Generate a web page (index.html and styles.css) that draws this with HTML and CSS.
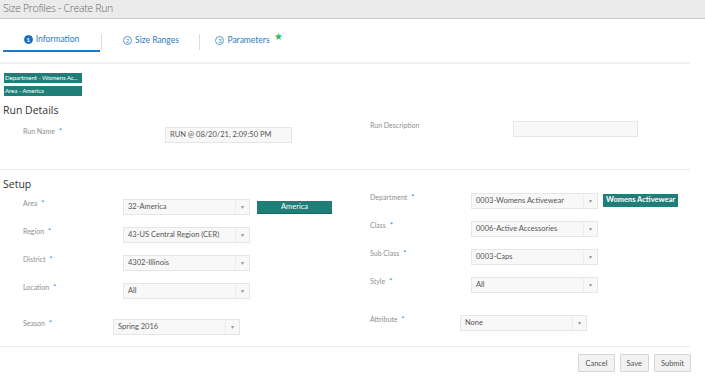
FILE: index.html
```html
<!DOCTYPE html>
<html lang="en">
<head>
<meta charset="utf-8">
<title>Size Profiles - Create Run</title>
<link rel="stylesheet" href="styles.css">
</head>
<body>
<header class="titlebar">Size Profiles - Create Run</header>

<nav class="tabs">
  <div class="tab active"><span class="num filled">1</span>Information</div>
  <div class="tab"><span class="num">2</span>Size Ranges</div>
  <div class="tab last"><span class="num">3</span>Parameters<span class="star">★</span></div>
</nav>

<div class="chips">
  <span class="chip">Department - Womens Ac...</span>
  <span class="chip">Area - America</span>
</div>

<section class="section details">
  <h2 class="heading">Run Details</h2>
  <div class="cols">
    <div class="col left">
      <div class="row"><label class="lbl wide">Run Name <i>*</i></label><div class="input">RUN @ 08/20/21, 2:09:50 PM</div></div>
    </div>
    <div class="col right">
      <div class="row"><label class="lbl wide">Run Description</label><div class="input empty"></div></div>
    </div>
  </div>
</section>

<section class="section setup">
  <h2 class="heading">Setup</h2>
  <div class="cols">
    <div class="col left">
      <div class="row"><label class="lbl">Area <i>*</i></label><div class="select">32-America<span class="arrow">▾</span></div><span class="tag tag-area">America</span></div>
      <div class="row"><label class="lbl">Region <i>*</i></label><div class="select">43-US Central Region (CER)<span class="arrow">▾</span></div></div>
      <div class="row"><label class="lbl">District <i>*</i></label><div class="select">4302-Illinois<span class="arrow">▾</span></div></div>
      <div class="row"><label class="lbl">Location <i>*</i></label><div class="select">All<span class="arrow">▾</span></div></div>
      <div class="row last"><label class="lbl short">Season <i>*</i></label><div class="select">Spring 2016<span class="arrow">▾</span></div></div>
    </div>
    <div class="col right">
      <div class="row"><label class="lbl">Department <i>*</i></label><div class="select">0003-Womens Activewear<span class="arrow">▾</span></div><span class="tag tag-dept">Womens Activewear</span></div>
      <div class="row"><label class="lbl">Class <i>*</i></label><div class="select">0006-Active Accessories<span class="arrow">▾</span></div></div>
      <div class="row"><label class="lbl">Sub Class <i>*</i></label><div class="select">0003-Caps<span class="arrow">▾</span></div></div>
      <div class="row"><label class="lbl">Style <i>*</i></label><div class="select">All<span class="arrow">▾</span></div></div>
      <div class="row last r"><label class="lbl short">Attribute <i>*</i></label><div class="select">None<span class="arrow">▾</span></div></div>
    </div>
  </div>
</section>

<footer class="actions">
  <button class="btn">Cancel</button>
  <button class="btn">Save</button>
  <button class="btn">Submit</button>
</footer>
</body>
</html>
```

FILE: styles.css
```css
* { box-sizing: border-box; }
html, body { margin: 0; padding: 0; background: #fff; }
body {
  font-family: "Lato", "Open Sans", sans-serif;
  color: #444;
  width: 705px;
  overflow: hidden;
}

.titlebar {
  height: 19px;
  background: #ebebeb;
  border-bottom: 1px solid #c9c9c9;
  color: #6a6a6a;
  font-family: "Open Sans", sans-serif;
  font-weight: 300;
  font-size: 10.5px;
  line-height: 17px;
  padding-left: 3px;
  letter-spacing: -0.3px;
}

.tabs {
  display: flex;
  margin-top: 11px;
  padding-left: 3px;
  height: 34px;
  border-bottom: 2px solid #f0f0f0;
  width: 690px;
}
.tab {
  width: 98px;
  height: 22px;
  display: flex;
  align-items: center;
  justify-content: center;
  color: #2e7bc4;
  font-size: 8.5px;
  position: relative;
  padding-bottom: 2px;
}
.tab::after {
  content: "";
  position: absolute;
  right: 0;
  top: 4px;
  height: 16px;
  border-right: 1px solid #dcdcdc;
}
.tab.last::after { display: none; }
.tab.active { border-bottom: 2px solid #1f77c9; margin-right: 2px; width: 97px; }
.tab.active::after { right: -2px; }
.num {
  width: 9px;
  height: 9px;
  border-radius: 50%;
  border: 1px solid #5a9ad6;
  font-size: 6px;
  line-height: 7px;
  text-align: center;
  margin-right: 3px;
  color: #3b86cc;
}
.num.filled { background: #1a6fc4; border-color: #1a6fc4; color: #fff; font-weight: 700; }
.star { color: #1fbf5b; font-size: 10px; margin-left: 4px; position: relative; top: -4px; }

.chips {
  display: flex;
  flex-direction: column;
  gap: 3px;
  padding: 9px 0 0 4px;
}
.chip {
  width: 78px;
  height: 10px;
  background: #1f7f78;
  color: #fff;
  font-size: 6.2px;
  line-height: 10px;
  padding-left: 1px;
  white-space: nowrap;
  letter-spacing: -0.1px;
}

.heading {
  margin: 0;
  font-weight: 400;
  font-size: 10.5px;
  color: #333;
  padding-left: 3px;
  font-family: "Open Sans", sans-serif;
}
.details { margin-top: 7px; border-bottom: 1px solid #ebebeb; width: 690px; height: 67px; }
.setup { padding-top: 7px; width: 690px; border-bottom: 1px solid #ebebeb; height: 177px; }

.cols { display: grid; grid-template-columns: 350px 340px; }
.col.left { padding-left: 23px; padding-top: 8px; }
.col.right { padding-left: 20px; padding-top: 2px; }
.details .col.left { padding-top: 10px; }
.details .col.right { padding-top: 4px; }

.row { display: flex; align-items: flex-start; margin-bottom: 12px; height: 16px; }
.row.last { margin-top: 20px; }
.row.last.r { margin-top: 22px; }
.lbl {
  width: 100px;
  flex: none;
  font-size: 7px;
  color: #8f8f8f;
  line-height: 9px;
}
.lbl.wide { width: 142px; }
.lbl.short { width: 90px; }
.col.right .lbl.wide { width: 143px; }
.col.right .lbl { width: 101px; }
.col.right .lbl.short { width: 90px; }
.lbl i { font-style: normal; color: #3d8fd6; font-size: 8px; margin-left: 2px; }

.input, .select {
  width: 127px;
  height: 16px;
  background: #f8f8f8;
  border: 1px solid #e6e6e6;
  font-size: 7.5px;
  line-height: 14px;
  padding-left: 4px;
  color: #555;
  position: relative;
  flex: none;
}
.input.empty { width: 125px; }
.arrow {
  position: absolute;
  right: 0;
  top: 0;
  width: 14px;
  height: 14px;
  border-left: 1px solid #ececec;
  text-align: center;
  color: #999;
  font-size: 6px;
  line-height: 14px;
}
.tag {
  height: 13px;
  background: #1f7f78;
  color: #fff;
  font-size: 7.5px;
  line-height: 12px;
  text-align: center;
  flex: none;
}
.tag-area { width: 75px; margin-left: 7px; margin-top: 2px; border-bottom: 1px solid #176660; }
.tag-dept { width: 75px; margin-left: 5px; margin-top: 1px; font-weight: 700; }

.actions {
  display: flex;
  justify-content: flex-end;
  gap: 5px;
  padding: 7px 14px 0 0;
}
.btn {
  height: 18px;
  background: #f2f2f2;
  border: 1px solid #d6d6d6;
  border-radius: 1px;
  font-family: inherit;
  font-size: 7.5px;
  color: #555;
  padding: 0 6px;
}
```
